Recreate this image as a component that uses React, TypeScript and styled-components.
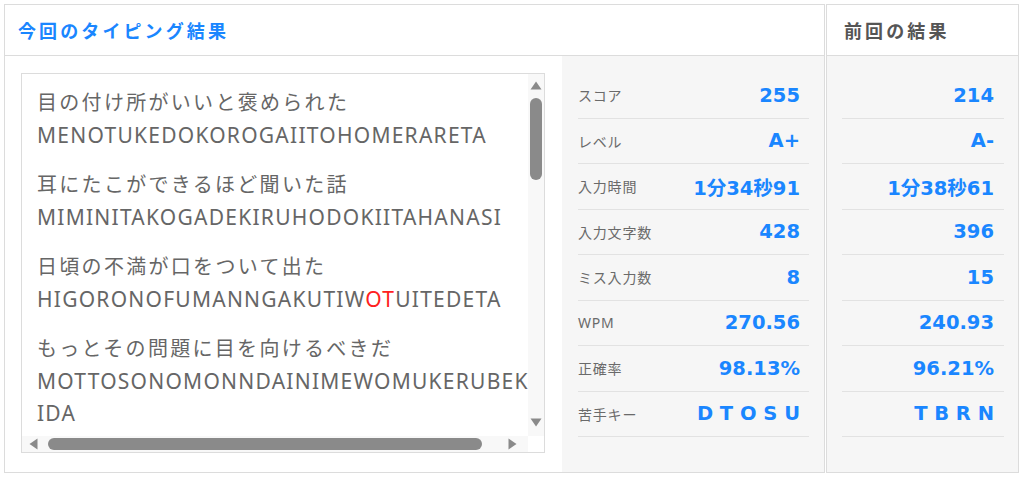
import React from "react";
import styled, { createGlobalStyle } from "styled-components";

const GlobalStyle = createGlobalStyle`
  html, body { margin: 0; padding: 0; background: #ffffff; }
  body { font-family: "Noto Sans", "Noto Sans CJK JP", sans-serif; }
  * { box-sizing: border-box; }
`;

const BLUE = "#1a86ff";
const JP = `"Noto Sans", "Noto Sans CJK JP", sans-serif`;
const NUM = `"DejaVu Sans", "Noto Sans CJK JP", sans-serif`;

const Page = styled.div`
  display: flex;
  gap: 1px;
  padding: 4px 0 0 4px;
  width: 1024px;
  height: 481px;
`;

const Panel = styled.section<{ $w: number }>`
  width: ${(p) => p.$w}px;
  height: 469px;
  border: 1px solid #dcdcdc;
  display: flex;
  flex-direction: column;
`;

const Header = styled.header<{ $pad: number }>`
  height: 51px;
  flex: none;
  border-bottom: 1px solid #dcdcdc;
  display: flex;
  align-items: center;
  padding-left: ${(p) => p.$pad}px;
`;

const Title = styled.h2<{ $muted?: boolean }>`
  margin: 0;
  font-family: ${JP};
  font-size: 18px;
  font-weight: 700;
  letter-spacing: 3.1px;
  color: ${(p) => (p.$muted ? "#555555" : BLUE)};
`;

const Body = styled.div`
  flex: 1;
  display: flex;
  min-height: 0;
`;

const TextRegion = styled.div`
  flex: 1;
  padding: 17px 17px 0 16px;
`;

const Box = styled.div`
  width: 524px;
  height: 380px;
  border: 1px solid #dcdcdc;
  display: grid;
  grid-template-columns: 1fr 16px;
  grid-template-rows: 1fr 16px;
  background: #fff;
`;

const Content = styled.div`
  overflow: hidden;
  padding: 13px 0 0 15px;
`;

const Sentences = styled.div`
  width: 500px;
`;

const Sentence = styled.div`
  margin-bottom: 18px;
  font-family: ${JP};
  font-size: 20px;
  line-height: 32px;
  color: #666666;
  word-break: break-all;
`;

const Kana = styled.div`
  letter-spacing: 2.3px;
`;

const Roma = styled.div`
  font-size: 21px;
  letter-spacing: 1.25px;
`;

const Miss = styled.span`
  color: #ff2020;
`;

const VTrack = styled.div`
  background: #f8f8f8;
  display: flex;
  flex-direction: column;
  align-items: center;
  padding: 7px 0 9px;
`;

const HTrack = styled.div`
  background: #f8f8f8;
  display: flex;
  align-items: center;
  padding: 0 11px 0 7px;
`;

const Corner = styled.div`
  background: #ffffff;
`;

const VThumb = styled.div`
  width: 12px;
  height: 82px;
  margin-top: 8px;
  border-radius: 6px;
  background: #8a8a8a;
`;

const HThumb = styled.div`
  height: 12px;
  width: 434px;
  margin-left: 10px;
  border-radius: 6px;
  background: #8a8a8a;
`;

const Spacer = styled.div`
  flex: 1;
`;

const Arrow = styled.svg`
  display: block;
  flex: none;
`;

const StatsCol = styled.div<{ $w: number; $padL: number; $padR: number }>`
  width: ${(p) => p.$w}px;
  flex: none;
  height: 100%;
  background: #f6f6f6;
  padding: 17px ${(p) => p.$padR}px 0 ${(p) => p.$padL}px;
`;

const Row = styled.div<{ $padR: number }>`
  height: 45.5px;
  border-bottom: 1px solid #e2e2e2;
  display: flex;
  align-items: center;
  justify-content: space-between;
  padding-right: ${(p) => p.$padR}px;
`;

const Label = styled.span`
  font-family: ${JP};
  font-size: 14px;
  letter-spacing: 0.8px;
  color: #6a6a6a;
`;

const Value = styled.span`
  margin-left: auto;
  font-family: ${NUM};
  font-size: 19.5px;
  font-weight: 700;
  color: ${BLUE};
  white-space: pre;
`;

type Stat = { label: string; now: string; prev: string };

const stats: Stat[] = [
  { label: "スコア", now: "255", prev: "214" },
  { label: "レベル", now: "A+", prev: "A-" },
  { label: "入力時間", now: "1分34秒91", prev: "1分38秒61" },
  { label: "入力文字数", now: "428", prev: "396" },
  { label: "ミス入力数", now: "8", prev: "15" },
  { label: "WPM", now: "270.56", prev: "240.93" },
  { label: "正確率", now: "98.13%", prev: "96.21%" },
  { label: "苦手キー", now: "D T O S U", prev: "T B R N" },
];

const Up = () => (
  <Arrow width="12" height="9" viewBox="0 0 12 9">
    <path d="M6 0.5 L11.5 8.5 L0.5 8.5 Z" fill="#8a8a8a" />
  </Arrow>
);
const Down = () => (
  <Arrow width="12" height="9" viewBox="0 0 12 9">
    <path d="M0.5 0.5 L11.5 0.5 L6 8.5 Z" fill="#8a8a8a" />
  </Arrow>
);
const Left = () => (
  <Arrow width="9" height="12" viewBox="0 0 9 12">
    <path d="M8.5 0.5 L8.5 11.5 L0.5 6 Z" fill="#8a8a8a" />
  </Arrow>
);
const Right = () => (
  <Arrow width="9" height="12" viewBox="0 0 9 12">
    <path d="M0.5 0.5 L8.5 6 L0.5 11.5 Z" fill="#8a8a8a" />
  </Arrow>
);

export default function App() {
  return (
    <>
      <GlobalStyle />
      <Page>
        <Panel $w={821}>
          <Header $pad={13}>
            <Title>今回のタイピング結果</Title>
          </Header>
          <Body>
            <TextRegion>
              <Box>
                <Content>
                  <Sentences>
                    <Sentence>
                      <Kana>目の付け所がいいと褒められた</Kana>
                      <Roma>MENOTUKEDOKOROGAIITOHOMERARETA</Roma>
                    </Sentence>
                    <Sentence>
                      <Kana>耳にたこができるほど聞いた話</Kana>
                      <Roma>MIMINITAKOGADEKIRUHODOKIITAHANASI</Roma>
                    </Sentence>
                    <Sentence>
                      <Kana>日頃の不満が口をついて出た</Kana>
                      <Roma>
                        HIGORONOFUMANNGAKUTIW<Miss>OT</Miss>UITEDETA
                      </Roma>
                    </Sentence>
                    <Sentence>
                      <Kana>もっとその問題に目を向けるべきだ</Kana>
                      <Roma>MOTTOSONOMONNDAINIMEWOMUKERUBEKIDA</Roma>
                    </Sentence>
                  </Sentences>
                </Content>
                <VTrack>
                  <Up />
                  <VThumb />
                  <Spacer />
                  <Down />
                </VTrack>
                <HTrack>
                  <Left />
                  <HThumb />
                  <Spacer />
                  <Right />
                </HTrack>
                <Corner />
              </Box>
            </TextRegion>
            <StatsCol $w={262} $padL={16} $padR={15}>
              {stats.map((s) => (
                <Row key={s.label} $padR={9}>
                  <Label>{s.label}</Label>
                  <Value>{s.now}</Value>
                </Row>
              ))}
            </StatsCol>
          </Body>
        </Panel>
        <Panel $w={193}>
          <Header $pad={17}>
            <Title $muted>前回の結果</Title>
          </Header>
          <Body>
            <StatsCol $w={191} $padL={15} $padR={14}>
              {stats.map((s) => (
                <Row key={s.label} $padR={10}>
                  <Value>{s.prev}</Value>
                </Row>
              ))}
            </StatsCol>
          </Body>
        </Panel>
      </Page>
    </>
  );
}
